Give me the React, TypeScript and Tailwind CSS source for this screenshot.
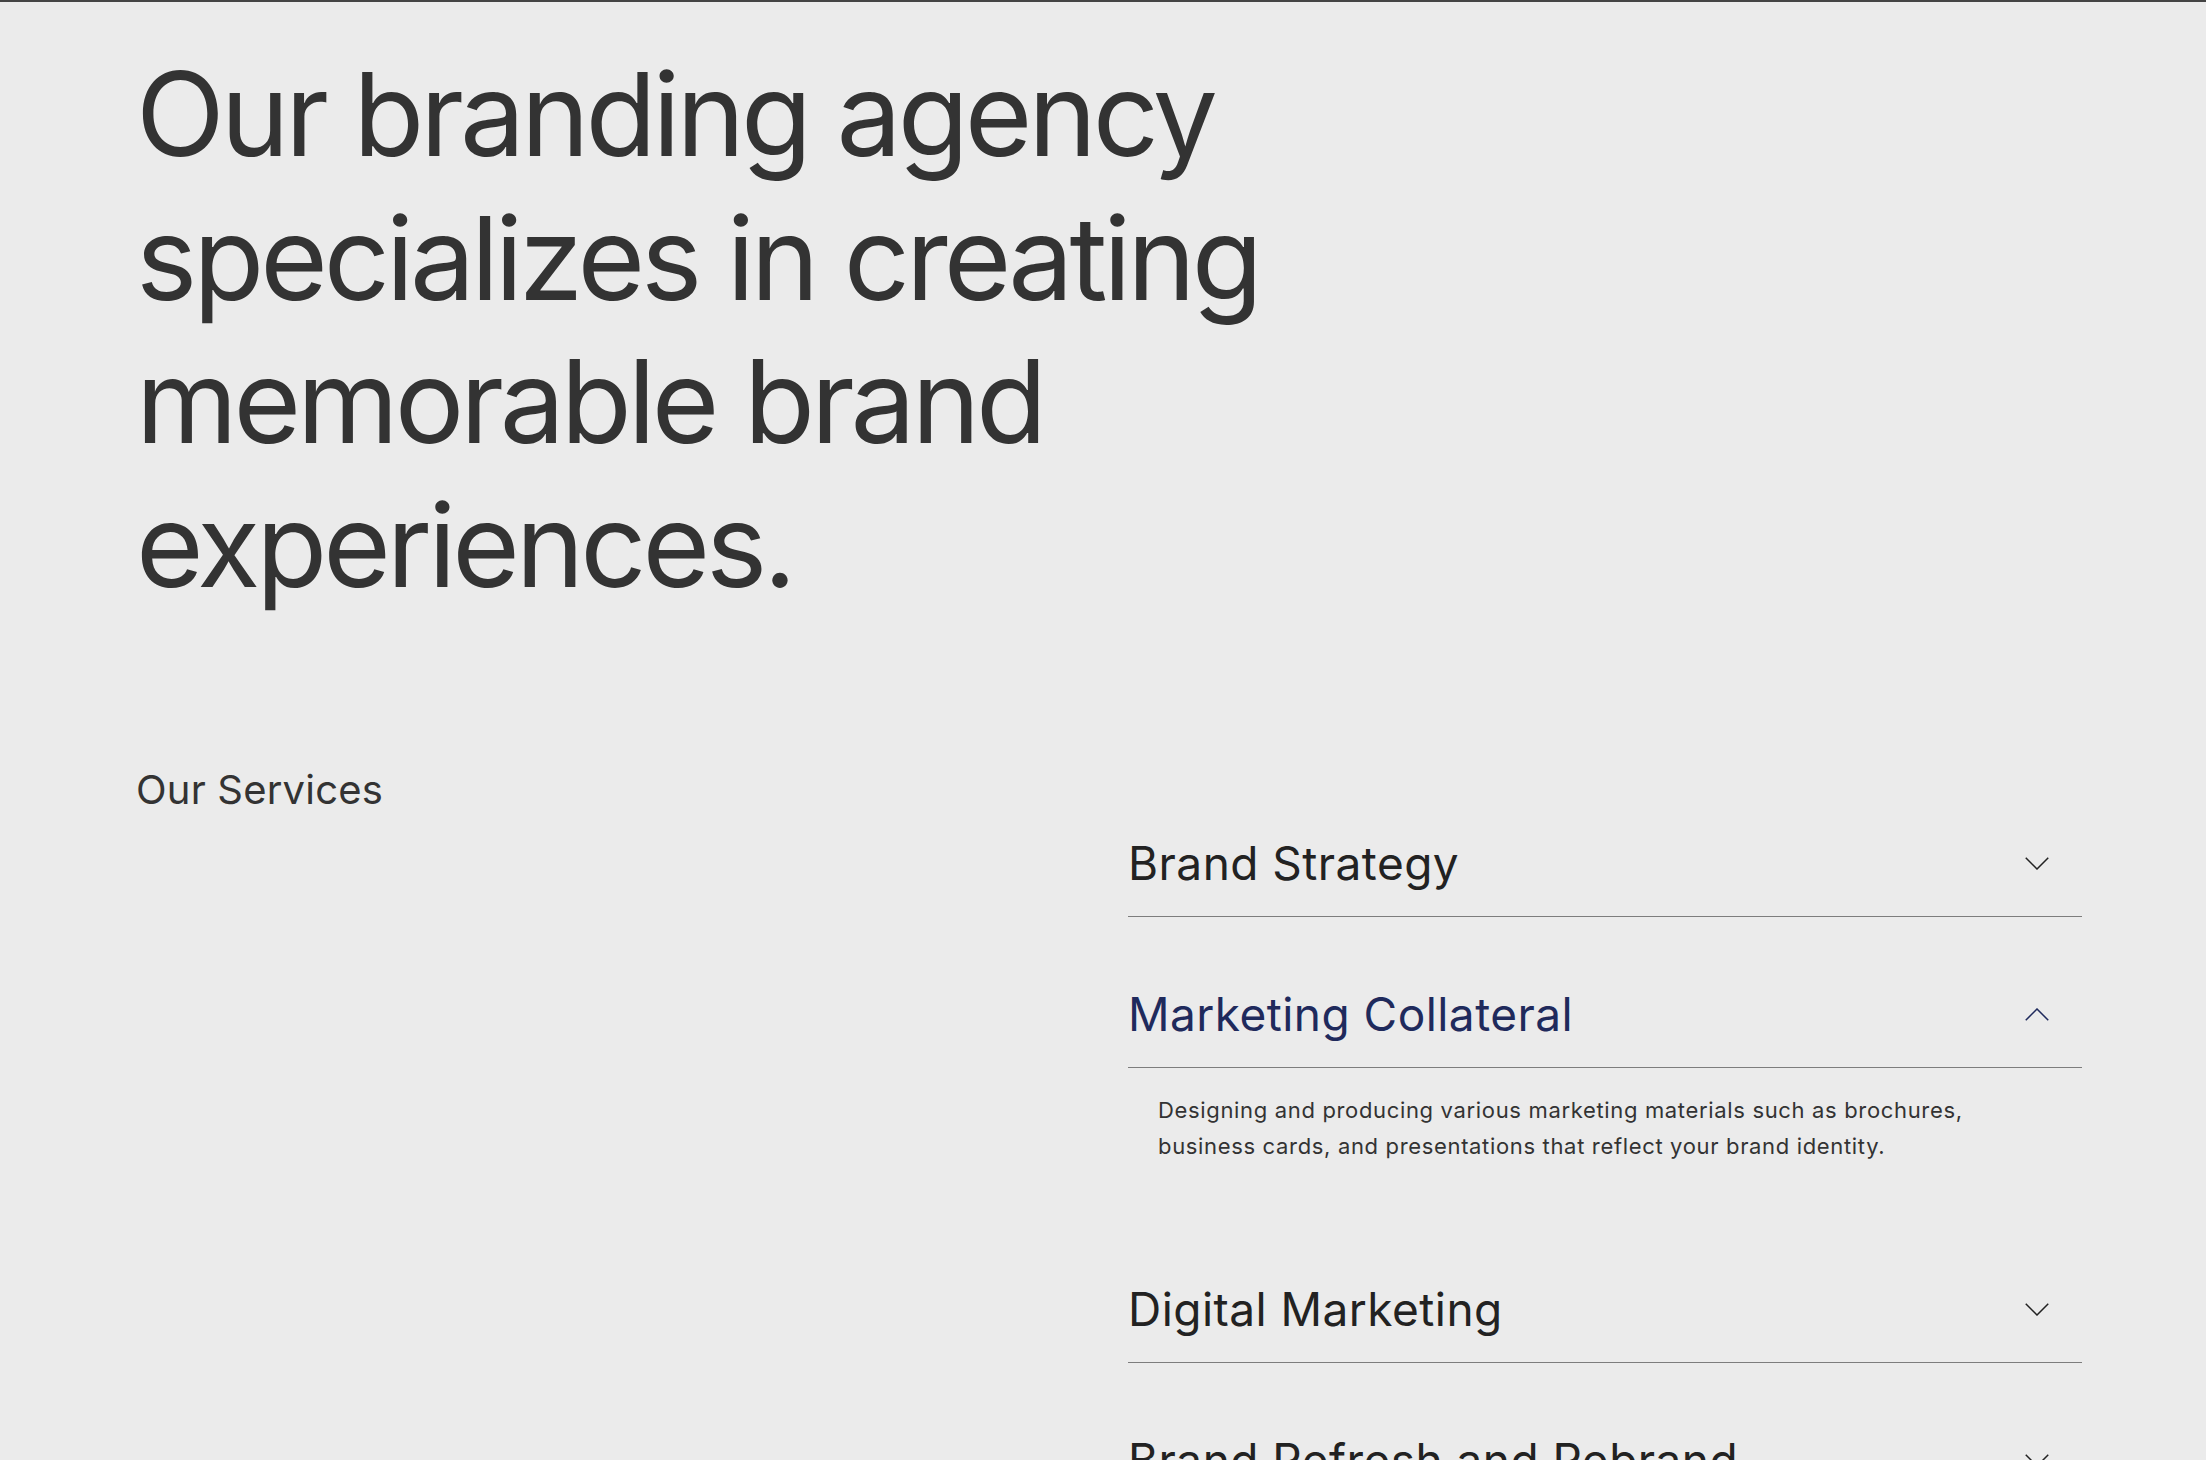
import React, { useState } from 'react';

const services = [
  {
    title: 'Brand Strategy',
    body: 'Defining your brand positioning, values and voice so every touchpoint tells the same story.',
  },
  {
    title: 'Marketing Collateral',
    body: 'Designing and producing various marketing materials such as brochures, business cards, and presentations that reflect your brand identity.',
  },
  {
    title: 'Digital Marketing',
    body: 'Campaigns, social content and web experiences that bring your brand to the right audience.',
  },
  {
    title: 'Brand Refresh and Rebrand',
    body: 'Evolving an existing identity to stay relevant while keeping the equity you have built.',
  },
];

const Chevron: React.FC<{ up?: boolean }> = ({ up }) => (
  <svg width="24" height="13" viewBox="0 0 24 13" fill="none" className={up ? 'rotate-180' : ''}>
    <path d="M0.75 0.75 L12 12 L23.25 0.75" stroke="currentColor" strokeWidth="1.5" />
  </svg>
);

const App: React.FC = () => {
  const [open, setOpen] = useState<number | null>(1);

  return (
    <div className="min-h-screen bg-[#ebebeb] border-t-2 border-[#444444] font-['Inter','Liberation_Sans',sans-serif] text-[#333333]">
      <div className="pl-[136px] pr-[124px]">
        <h1 className="pt-[41px] w-[1200px] text-[116px] leading-[143.5px] tracking-[-0.035em] text-[#333333]">
          Our branding agency specializes in creating memorable brand experiences.
        </h1>

        <div className="mt-[149px] flex">
          <div className="flex-1">
            <h2 className="text-[40px] leading-[48px] tracking-[0.005em] text-[#333333]">Our Services</h2>
          </div>

          <div className="w-[954px]">
            {services.map((s, i) => {
              const isOpen = open === i;
              return (
                <div key={s.title}>
                  <button
                    onClick={() => setOpen(isOpen ? null : i)}
                    className={`w-full pt-[69px] pb-[25px] border-b border-[#7d7d7d] flex items-center justify-between text-left ${
                      isOpen ? 'text-[#1f2a5c]' : 'text-[#222222]'
                    }`}
                  >
                    <span className="text-[46px] leading-[56px] tracking-[0.01em]">{s.title}</span>
                    <span className="mr-[33px]">
                      <Chevron up={isOpen} />
                    </span>
                  </button>
                  {isOpen && (
                    <div className="pl-[30px] pr-[60px] pt-[24px] pb-[48px]">
                      <p className="text-[22px] leading-[36px] tracking-[0.03em] text-[#333333]">{s.body}</p>
                    </div>
                  )}
                </div>
              );
            })}
          </div>
        </div>
      </div>
    </div>
  );
};

export default App;
